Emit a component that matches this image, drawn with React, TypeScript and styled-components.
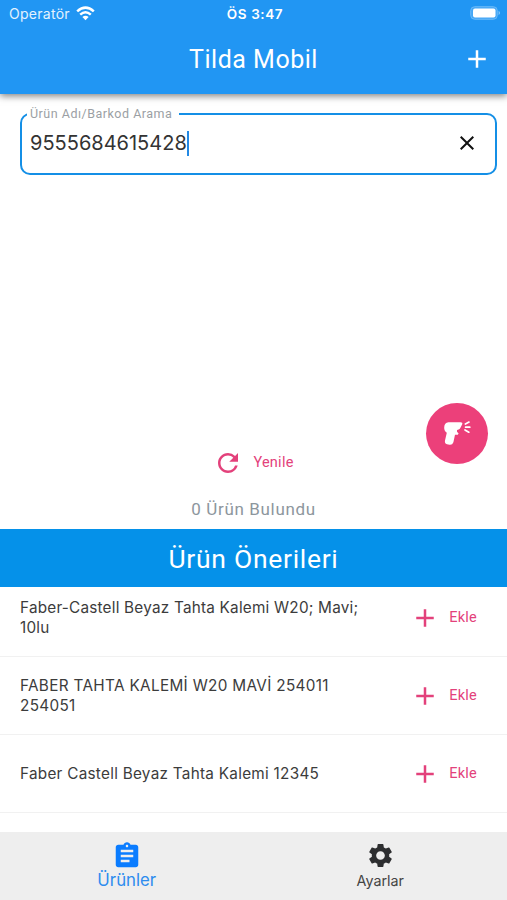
import React from 'react';
import styled, { createGlobalStyle } from 'styled-components';
import { MdAdd, MdAssignment, MdClose, MdRefresh, MdSettings } from 'react-icons/md';

const GlobalStyle = createGlobalStyle`
  * { box-sizing: border-box; }
  body { margin: 0; background: #fff; font-family: Inter, "Noto Sans", sans-serif; }
  button { border: 0; background: none; padding: 0; font: inherit; color: inherit; }
`;

const Screen = styled.div`
  height: 900px;
  display: flex;
  flex-direction: column;
  overflow: hidden;
  background: #fff;
`;

const Header = styled.header`
  position: relative;
  flex: none;
  height: 94px;
  background: #2196f3;
  color: #fff;
  box-shadow: 0 2px 7px rgba(0, 0, 0, 0.5);
`;

const StatusBar = styled.div`
  height: 27px;
  display: grid;
  grid-template-columns: 1fr auto 1fr;
  align-items: center;
  padding: 0 6px 0 9px;
`;

const Carrier = styled.div`
  display: flex;
  align-items: center;
  gap: 6px;
  font-size: 14px;
  letter-spacing: 0.27px;
  color: #e4f2fe;
`;

const Clock = styled.div`
  font-size: 13.5px;
  font-weight: 600;
  letter-spacing: 0.6px;
`;

const BatteryIcon = styled.svg`
  justify-self: end;
  margin-top: -1px;
`;

const TitleBar = styled.div`
  height: 66px;
  display: grid;
  grid-template-columns: 1fr auto 1fr;
  align-items: center;
  padding: 0 15px;
`;

const Title = styled.h1`
  grid-column: 2;
  margin: 0;
  font: 400 25px/30px Roboto, sans-serif;
  letter-spacing: 0.5px;
`;

const AddButton = styled.button`
  justify-self: end;
  display: flex;
  margin-top: -2px;
`;

const SearchField = styled.div`
  position: relative;
  flex: none;
  height: 62px;
  margin: 19px 10px 0 20px;
  padding: 0 16px 2px 8px;
  border: 2.5px solid #148fe6;
  border-radius: 10px;
  display: flex;
  align-items: center;
  justify-content: space-between;
`;

const FieldLabel = styled.span`
  position: absolute;
  left: 5px;
  top: -9px;
  padding: 0 7px 0 3px;
  background: #fff;
  color: #9b9fa4;
  font: 400 12.5px/16px Roboto, sans-serif;
  letter-spacing: 0.5px;
  white-space: nowrap;
`;

const FieldValue = styled.div`
  display: flex;
  align-items: center;
  font-size: 20px;
  line-height: 26px;
  color: #333;
`;

const Caret = styled.span`
  width: 2px;
  height: 25px;
  background: #2389e4;
`;

const Results = styled.main`
  position: relative;
  flex: none;
  height: 354px;
  display: flex;
  flex-direction: column;
  justify-content: flex-end;
  align-items: center;
  padding-bottom: 9px;
`;

const ActionButton = styled.button<{ $gap: number }>`
  display: flex;
  align-items: center;
  gap: ${({ $gap }) => $gap}px;
  color: #e3417b;
  font: 400 14.5px/20px Roboto, sans-serif;
  letter-spacing: 0.25px;
  white-space: nowrap;
`;

const ResultCount = styled.p`
  margin: 20px 0 0;
  color: #8d969d;
  font: 400 17px/22px Roboto, sans-serif;
  letter-spacing: 0.65px;
`;

const ScanButton = styled.button`
  position: absolute;
  right: 19px;
  top: 228px;
  width: 62px;
  height: 61px;
  border-radius: 50%;
  background: #ec407a;
  display: flex;
  align-items: center;
  justify-content: center;
`;

const SectionTitle = styled.h2`
  flex: none;
  height: 58px;
  margin: 0;
  background: #0591e9;
  color: #fff;
  text-align: center;
  font: 400 26.5px/60px Roboto, sans-serif;
  letter-spacing: 0.7px;
`;

const List = styled.ul`
  flex: 1;
  min-height: 0;
  margin: 0;
  padding: 0;
  list-style: none;
  overflow: hidden;
`;

const Row = styled.li<{ $first?: boolean }>`
  height: ${({ $first }) => ($first ? 70 : 78)}px;
  padding: 0 30px 0 20px;
  padding-bottom: ${({ $first }) => ($first ? 8 : 0)}px;
  border-bottom: 1px solid #f1f1f1;
  display: flex;
  align-items: center;
  justify-content: space-between;
`;

const ProductName = styled.span<{ $spacing: number }>`
  width: 350px;
  font-size: 15.3px;
  line-height: 20px;
  letter-spacing: ${({ $spacing }) => $spacing}px;
  color: #3c3c3c;
  white-space: pre-line;
`;

const TabBar = styled.nav`
  flex: none;
  height: 68px;
  background: #eee;
  display: grid;
  grid-template-columns: 1fr 1fr;
`;

const Tab = styled.button<{ $active?: boolean }>`
  display: flex;
  flex-direction: column;
  align-items: center;
  justify-content: flex-start;
  padding-top: 9px;
  color: ${({ $active }) => ($active ? '#0a7cff' : '#2d2e30')};
`;

const TabLabel = styled.span<{ $active?: boolean }>`
  font-size: ${({ $active }) => ($active ? 16.8 : 14.3)}px;
  line-height: 20px;
  margin-top: ${({ $active }) => ($active ? -1 : 1)}px;
  color: ${({ $active }) => ($active ? '#2c8cee' : '#444')};
`;

const products = [
  { name: 'Faber-Castell Beyaz Tahta Kalemi W20; Mavi;\n10lu', spacing: 0.22 },
  { name: 'FABER TAHTA KALEMİ W20 MAVİ 254011\n254051', spacing: 0.33 },
  { name: 'Faber Castell Beyaz Tahta Kalemi 12345', spacing: 0.27 },
];

const Wifi = () => (
  <svg width="19" height="15" viewBox="0 0 19 15" fill="none" stroke="#fff" strokeWidth="2.5">
    <path d="M1.2 5.4Q9.5-2.2 17.8 5.4" />
    <path d="M4.2 8.6Q9.5 3.8 14.8 8.6" />
    <path d="M9.5 14.2 6.4 11.1Q9.5 8.6 12.6 11.1Z" fill="#fff" stroke="none" />
  </svg>
);

const Battery = () => (
  <BatteryIcon width="31" height="14" viewBox="0 0 31 14">
    <rect x="0.7" y="0.7" width="26.6" height="12.6" rx="4" fill="#45a7f6" stroke="#6ab9f8" />
    <rect x="3" y="2.5" width="22.5" height="9" rx="2" fill="#fff" />
    <path d="M28.6 4.8q2.8 2.2 0 4.4z" fill="#8ac8fa" />
  </BatteryIcon>
);

const Scanner = () => (
  <svg width="28" height="26" viewBox="0 0 28 26" fill="#fff">
    <path d="M5.4 1.2H17.4Q20 1.2 19.2 3.2L17.6 6.6Q16.8 8.5 15 8.8L14 9V10.8L15.6 12.4 14.8 13.8H12L10.4 21.2Q9.4 24.2 6.5 23.8L4 23.2Q1.4 22.3 2 19.4L3.8 11.8Q1 9.8 1.2 6.2 1.4 1.5 5.4 1.2Z" />
    <path d="M22.4 3 26 1.1M22.6 6.2H26.8M22 9 25.8 11.2" fill="none" stroke="#fff" strokeWidth="1.7" strokeLinecap="round" />
  </svg>
);

export default function App() {
  return (
    <Screen>
      <GlobalStyle />
      <Header>
        <StatusBar>
          <Carrier>Operatör <Wifi /></Carrier>
          <Clock>ÖS 3:47</Clock>
          <Battery />
        </StatusBar>
        <TitleBar>
          <Title>Tilda Mobil</Title>
          <AddButton aria-label="Ekle"><MdAdd size={30} /></AddButton>
        </TitleBar>
      </Header>
      <SearchField>
        <FieldLabel>Ürün Adı/Barkod Arama</FieldLabel>
        <FieldValue>9555684615428<Caret /></FieldValue>
        <MdClose size={24} color="#111" />
      </SearchField>
      <Results>
        <ActionButton $gap={10}><MdRefresh size={30} />Yenile</ActionButton>
        <ResultCount>0 Ürün Bulundu</ResultCount>
        <ScanButton aria-label="Barkod"><Scanner /></ScanButton>
      </Results>
      <SectionTitle>Ürün Önerileri</SectionTitle>
      <List>
        {products.map((p, i) => (
          <Row key={p.name} $first={i === 0}>
            <ProductName $spacing={p.spacing}>{p.name}</ProductName>
            <ActionButton $gap={9}><MdAdd size={30} />Ekle</ActionButton>
          </Row>
        ))}
      </List>
      <TabBar>
        <Tab $active><MdAssignment size={30} /><TabLabel $active>Ürünler</TabLabel></Tab>
        <Tab><MdSettings size={29} /><TabLabel>Ayarlar</TabLabel></Tab>
      </TabBar>
    </Screen>
  );
}
